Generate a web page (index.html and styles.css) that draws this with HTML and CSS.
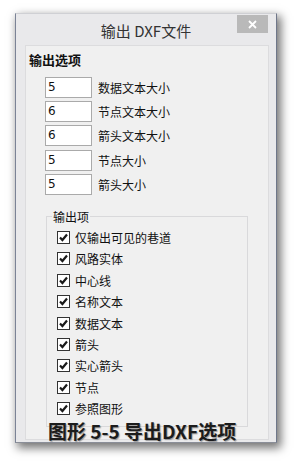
FILE: index.html
```html
<!DOCTYPE html>
<html lang="zh">
<head>
<meta charset="utf-8">
<link rel="stylesheet" href="styles.css">
</head>
<body>
<div class="stage">
  <div class="window">
    <div class="titlebar">
      <span class="title">输出 DXF文件</span>
      <span class="close">
        <svg width="11" height="11" viewBox="0 0 11 11"><path d="M2 2 L9 9 M9 2 L2 9" stroke="#fff" stroke-width="1.8" fill="none"/></svg>
      </span>
    </div>
    <div class="content">
      <div class="section-title">输出选项</div>
      <div class="fields">
        <div class="field"><span class="input">5</span><span class="label">数据文本大小</span></div>
        <div class="field"><span class="input">6</span><span class="label">节点文本大小</span></div>
        <div class="field"><span class="input">6</span><span class="label">箭头文本大小</span></div>
        <div class="field"><span class="input">5</span><span class="label">节点大小</span></div>
        <div class="field"><span class="input">5</span><span class="label">箭头大小</span></div>
      </div>
      <fieldset class="group">
        <legend>输出项</legend>
        <div class="check"><span class="box"><svg width="11" height="11" viewBox="0 0 11 11"><path d="M2 5.5 L4.4 8 L9 2.5" stroke="#1a1a1a" stroke-width="2.2" fill="none"/></svg></span>仅输出可见的巷道</div>
        <div class="check"><span class="box"><svg width="11" height="11" viewBox="0 0 11 11"><path d="M2 5.5 L4.4 8 L9 2.5" stroke="#1a1a1a" stroke-width="2.2" fill="none"/></svg></span>风路实体</div>
        <div class="check"><span class="box"><svg width="11" height="11" viewBox="0 0 11 11"><path d="M2 5.5 L4.4 8 L9 2.5" stroke="#1a1a1a" stroke-width="2.2" fill="none"/></svg></span>中心线</div>
        <div class="check"><span class="box"><svg width="11" height="11" viewBox="0 0 11 11"><path d="M2 5.5 L4.4 8 L9 2.5" stroke="#1a1a1a" stroke-width="2.2" fill="none"/></svg></span>名称文本</div>
        <div class="check"><span class="box"><svg width="11" height="11" viewBox="0 0 11 11"><path d="M2 5.5 L4.4 8 L9 2.5" stroke="#1a1a1a" stroke-width="2.2" fill="none"/></svg></span>数据文本</div>
        <div class="check"><span class="box"><svg width="11" height="11" viewBox="0 0 11 11"><path d="M2 5.5 L4.4 8 L9 2.5" stroke="#1a1a1a" stroke-width="2.2" fill="none"/></svg></span>箭头</div>
        <div class="check"><span class="box"><svg width="11" height="11" viewBox="0 0 11 11"><path d="M2 5.5 L4.4 8 L9 2.5" stroke="#1a1a1a" stroke-width="2.2" fill="none"/></svg></span>实心箭头</div>
        <div class="check"><span class="box"><svg width="11" height="11" viewBox="0 0 11 11"><path d="M2 5.5 L4.4 8 L9 2.5" stroke="#1a1a1a" stroke-width="2.2" fill="none"/></svg></span>节点</div>
        <div class="check"><span class="box"><svg width="11" height="11" viewBox="0 0 11 11"><path d="M2 5.5 L4.4 8 L9 2.5" stroke="#1a1a1a" stroke-width="2.2" fill="none"/></svg></span>参照图形</div>
      </fieldset>
    </div>
  </div>
  <div class="caption">图形 5-5 导出DXF选项</div>
</div>
</body>
</html>
```
FILE: styles.css
```css
html, body {
  margin: 0;
  padding: 0;
  background: #ffffff;
}
body {
  width: 299px;
  height: 464px;
  overflow: hidden;
  font-family: "Noto Sans CJK SC", "Noto Sans", sans-serif;
}
.stage {
  position: relative;
  padding: 13px 0 0 15px;
}
.window {
  position: relative;
  width: 262px;
  height: 430px;
  box-sizing: border-box;
  background: #e9e9eb;
  border: 1px solid;
  border-color: #cfd0d4 #6f778a #8a8e98 #7b8396;
  box-shadow: 3px 4px 9px 1px rgba(0, 0, 0, 0.55);
  display: flex;
  flex-direction: column;
}
.titlebar {
  height: 31px;
  display: flex;
  align-items: center;
  justify-content: center;
  flex: none;
}
.title {
  font-size: 15px;
  line-height: 18px;
  color: #333;
  padding-top: 3px;
}
.close {
  position: absolute;
  left: 221px;
  top: 1px;
  width: 31px;
  height: 18px;
  background: #b9b9b9;
  display: flex;
  align-items: center;
  justify-content: center;
}
.content {
  flex: 1;
  margin: 0 7px 2px 9px;
  background: #f0f0f0;
  border: 1px solid #dcdcde;
  padding: 6px 0 0 3px;
}
.section-title {
  font-size: 13px;
  font-weight: bold;
  line-height: 16px;
  color: #111;
}
.fields {
  margin: 9px 0 0 16px;
  display: flex;
  flex-direction: column;
  gap: 3.2px;
}
.field {
  display: flex;
  align-items: center;
  gap: 6px;
  height: 21px;
}
.input {
  box-sizing: border-box;
  width: 47px;
  height: 21px;
  background: #fff;
  border: 1px solid #aaaaaa;
  font-family: "DejaVu Sans", sans-serif;
  font-size: 12px;
  line-height: 19px;
  padding-left: 2px;
  color: #111;
}
.label {
  font-size: 12px;
  color: #111;
}
.group {
  margin: 14px 0 0 17px;
  width: 202px;
  height: 218px;
  box-sizing: border-box;
  border: 1px solid #d9d9db;
  padding: 3px 0 0 10px;
}
.group legend {
  font-size: 12px;
  line-height: 15px;
  color: #111;
  padding: 0 1px;
  margin-left: -5px;
}
.check {
  display: flex;
  align-items: center;
  height: 21.4px;
  font-size: 12px;
  color: #111;
}
.box {
  box-sizing: border-box;
  width: 13px;
  height: 13px;
  border: 1px solid #333;
  background: #fff;
  margin-right: 5px;
  display: flex;
  align-items: center;
  justify-content: center;
}
.caption {
  position: absolute;
  left: 48px;
  top: 418px;
  font-size: 19px;
  line-height: 26px;
  font-weight: bold;
  color: #1c1c1c;
  text-shadow: 1px 1px 1px rgba(0, 0, 0, 0.35);
  white-space: nowrap;
}
```
